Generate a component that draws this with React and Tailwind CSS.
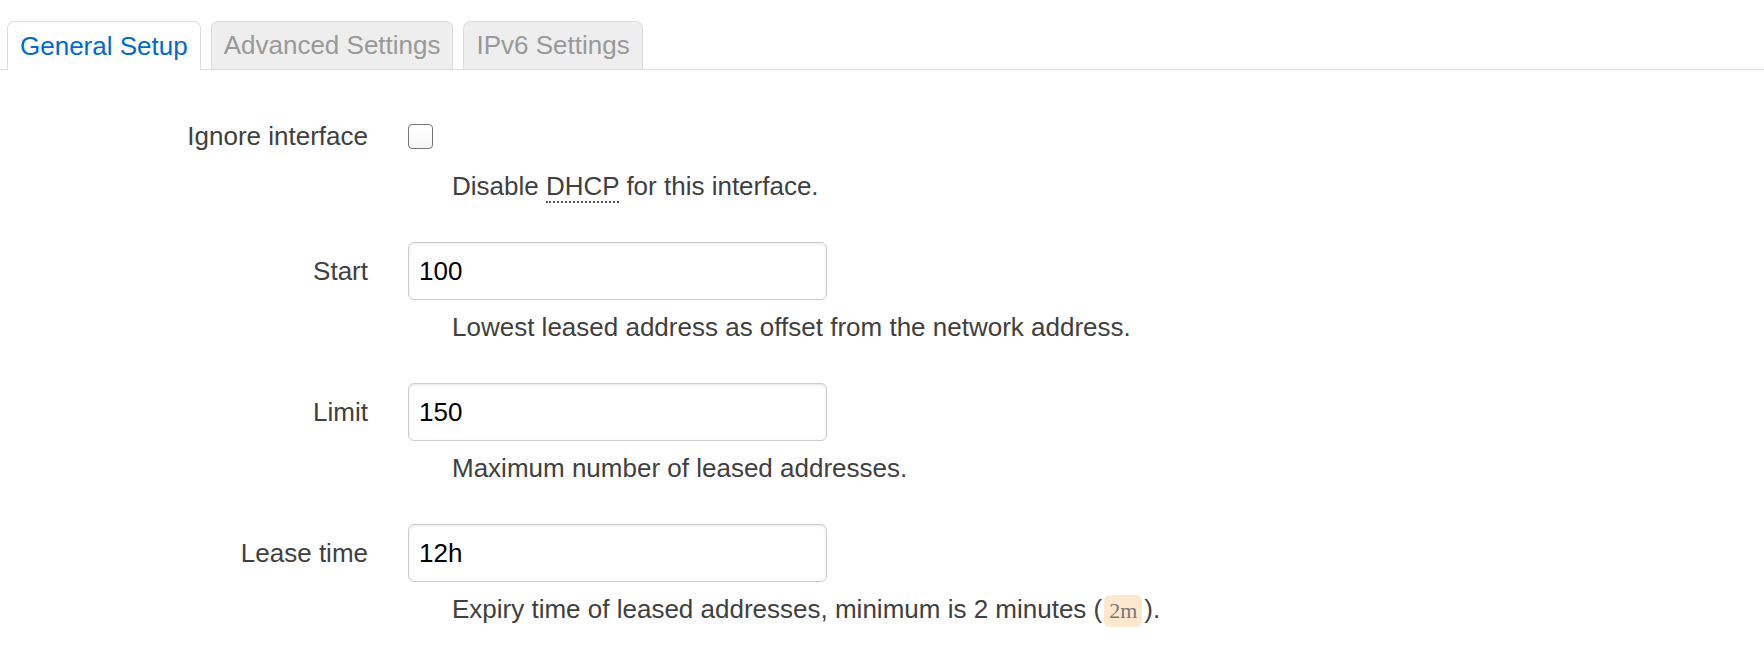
import React from "react";

const font = { fontFamily: '"Liberation Sans", Arial, sans-serif' };

function Tab({ active, children }) {
  if (active) {
    return (
      <div className="h-[49px] -mb-px px-[12px] flex items-center bg-white border border-b-0 border-[#ddd] rounded-t-[7px] text-[#0069d6]">
        {children}
      </div>
    );
  }
  return (
    <div className="h-[48px] px-[12px] flex items-center bg-[#eeeeee] border border-b-0 border-[#dddddd] rounded-t-[7px] text-[#999999]">
      {children}
    </div>
  );
}

function Label({ children }) {
  return (
    <div className="w-[368px] h-[58px] shrink-0 flex items-center justify-end text-[#404040]">
      {children}
    </div>
  );
}

function Desc({ children, className = "" }) {
  return (
    <div className={"pl-[44px] leading-[36px] text-[#404040] whitespace-nowrap " + className}>
      {children}
    </div>
  );
}

function TextInput({ value }) {
  return (
    <input
      type="text"
      defaultValue={value}
      className="block w-[419px] h-[58px] px-[10px] border border-[#cccccc] rounded-[6px] bg-white text-black text-[26px] outline-none shadow-[inset_0_1px_3px_rgba(0,0,0,0.1)]"
      style={font}
    />
  );
}

export default function App() {
  return (
    <div className="w-full min-h-[656px] bg-white text-[26px]" style={font}>
      <div className="flex items-end gap-[10px] pl-[7px] pt-[21px] border-b border-[#dddddd]">
        <Tab active>General Setup</Tab>
        <Tab>Advanced Settings</Tab>
        <Tab>IPv6 Settings</Tab>
      </div>

      <div className="pt-[37px]">
        <div className="flex">
          <Label>Ignore interface</Label>
          <div className="ml-[40px]">
            <div className="h-[58px] flex items-center">
              <div className="w-[25px] h-[25px] rounded-[4px] border border-[#767676] bg-gradient-to-b from-white to-[#f6f6f6]" />
            </div>
            <Desc className="mt-[3px]">
              Disable{" "}
              <abbr
                title="Dynamic Host Configuration Protocol"
                className="no-underline border-b-2 border-dotted border-[#555]"
              >
                DHCP
              </abbr>{" "}
              for this interface.
            </Desc>
          </div>
        </div>

        <div className="flex mt-[38px]">
          <Label>Start</Label>
          <div className="ml-[40px]">
            <TextInput value="100" />
            <Desc className="mt-[9px]">Lowest leased address as offset from the network address.</Desc>
          </div>
        </div>

        <div className="flex mt-[38px]">
          <Label>Limit</Label>
          <div className="ml-[40px]">
            <TextInput value="150" />
            <Desc className="mt-[9px]">Maximum number of leased addresses.</Desc>
          </div>
        </div>

        <div className="flex mt-[38px]">
          <Label>Lease time</Label>
          <div className="ml-[40px]">
            <TextInput value="12h" />
            <Desc className="mt-[9px]">
              Expiry time of leased addresses, minimum is 2 minutes (
              <code
                className="inline-block mx-[2px] px-[5px] leading-[32px] rounded-[6px] bg-[#fde8cf] text-[#777] text-[22px] align-middle"
                style={{ fontFamily: '"Liberation Serif", "Times New Roman", serif' }}
              >
                2m
              </code>
              ).
            </Desc>
          </div>
        </div>
      </div>
    </div>
  );
}
